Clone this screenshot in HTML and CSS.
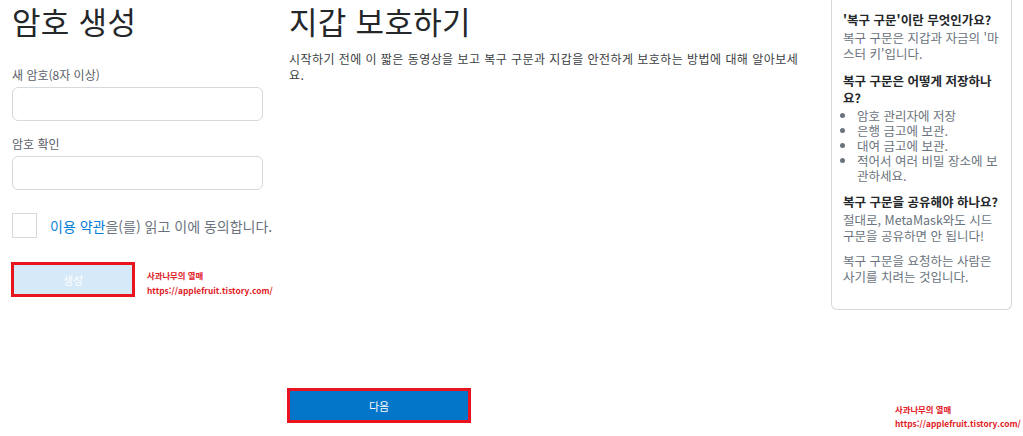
FILE: index.html
```html
<!DOCTYPE html>
<html lang="ko">
<head>
    <meta charset="UTF-8">
    <meta name="viewport" content="width=device-width, initial-scale=1.0">
    <title>암호 생성</title>
    <link rel="stylesheet" href="styles.css">
</head>
<body>
    <div class="page">
        <div class="create">
            <h1>암호 생성</h1>
            <label class="field-label" for="newPw">새 암호(8자 이상)</label>
            <input class="field" type="password" id="newPw">
            <label class="field-label" for="confirmPw">암호 확인</label>
            <input class="field" type="password" id="confirmPw">
            <div class="terms">
                <span class="check"></span>
                <span class="terms-text"><a href="#">이용 약관</a>을(를) 읽고 이에 동의합니다.</span>
            </div>
            <div class="create-row">
                <button class="btn-create">생성</button>
                <div class="mark">
                    <div>사과나무의 열매</div>
                    <div>https://applefruit.tistory.com/</div>
                </div>
            </div>
        </div>
        <div class="secure">
            <h1>지갑 보호하기</h1>
            <p class="intro">시작하기 전에 이 짧은 동영상을 보고 복구 구문과 지갑을 안전하게 보호하는 방법에 대해 알아보세요.</p>
            <button class="btn-next">다음</button>
        </div>
        <div class="side">
            <div class="card">
                <h3>'복구 구문'이란 무엇인가요?</h3>
                <p>복구 구문은 지갑과 자금의 '마스터 키'입니다.</p>
                <h3>복구 구문은 어떻게 저장하나요?</h3>
                <ul>
                    <li>암호 관리자에 저장</li>
                    <li>은행 금고에 보관.</li>
                    <li>대여 금고에 보관.</li>
                    <li>적어서 여러 비밀 장소에 보관하세요.</li>
                </ul>
                <h3>복구 구문을 공유해야 하나요?</h3>
                <p>절대로, MetaMask와도 시드 구문을 공유하면 안 됩니다!</p>
                <p class="last">복구 구문을 요청하는 사람은 사기를 치려는 것입니다.</p>
            </div>
            <div class="mark mark-side">
                <div>사과나무의 열매</div>
                <div>https://applefruit.tistory.com/</div>
            </div>
        </div>
    </div>
</body>
</html>
```

FILE: styles.css
```css
* {
    box-sizing: border-box;
}
body {
    margin: 0;
    background: #fff;
    color: #24272a;
    font-family: "Noto Sans CJK KR", "Noto Sans", sans-serif;
}
.page {
    display: flex;
    align-items: flex-start;
}
h1 {
    margin: 0;
    font-size: 31px;
    font-weight: 400;
    line-height: 42px;
    letter-spacing: 0.3px;
}
/* 왼쪽: 암호 생성 */
.create {
    flex: none;
    width: 263px;
    padding-left: 12px;
    display: flex;
    flex-direction: column;
}
.field-label {
    margin-top: 25px;
    font-size: 12px;
    line-height: 16px;
    color: #5b5d67;
}
.field-label + .field {
    margin-top: 4px;
}
.field + .field-label {
    margin-top: 15px;
}
.field {
    width: 251px;
    height: 34px;
    border: 1px solid #d6d9dc;
    border-radius: 6px;
    background: #fff;
}
.terms {
    display: flex;
    align-items: center;
    margin-top: 23px;
    white-space: nowrap;
}
.check {
    flex: none;
    width: 25px;
    height: 25px;
    border: 1px solid #d6d9dc;
    background: #fff;
}
.terms-text {
    margin-left: 13px;
    font-size: 14px;
    color: #6a737d;
}
.terms-text a {
    color: #037dd6;
    text-decoration: none;
}
.create-row {
    display: flex;
    align-items: flex-end;
    margin-top: 24px;
    white-space: nowrap;
}
.btn-create {
    flex: none;
    width: 124px;
    height: 35px;
    margin-left: -1px;
    border: 3px solid #e8141f;
    background: #d6e9f8;
    color: #fff;
    font-family: inherit;
    font-size: 11px;
}
.mark {
    color: #e0201f;
    font-size: 8.4px;
    font-weight: 700;
    line-height: 15px;
    white-space: nowrap;
}
.create-row .mark {
    margin-left: 12px;
    margin-bottom: -1px;
}
/* 가운데: 지갑 보호하기 */
.secure {
    flex: none;
    width: 516px;
    margin-left: 26px;
    display: flex;
    flex-direction: column;
}
.intro {
    margin: 9px 0 0;
    font-size: 12px;
    line-height: 16px;
    letter-spacing: 0.45px;
    color: #3b3e42;
}
.btn-next {
    width: 184px;
    height: 35px;
    margin-top: 305px;
    margin-left: -2px;
    border: 3px solid #e8141f;
    background: #0376c9;
    color: #fff;
    font-family: inherit;
    font-size: 11px;
}
/* 오른쪽: 도움말 카드 */
.side {
    flex: none;
    margin-left: auto;
    margin-right: 11px;
    width: 181px;
}
.card {
    border: 1px solid #d6d9dc;
    border-top: none;
    border-radius: 0 0 6px 6px;
    padding: 11px 11px 24px;
    font-size: 12.5px;
    line-height: 16px;
    word-break: break-all;
}
.card h3 {
    margin: 0;
    font-size: 12.5px;
    font-weight: 700;
    line-height: 17px;
    color: #24272a;
}
.card p {
    margin: 2px 0 0;
    color: #6a737d;
}
.card p + h3, .card ul + h3 {
    margin-top: 10px;
}
.card p.last {
    margin-top: 9px;
}
.card ul {
    margin: 2px 0 0;
    padding-left: 14px;
    color: #6a737d;
    line-height: 15px;
}
.mark-side {
    margin-top: 92px;
    margin-left: 64px;
    line-height: 14px;
}
```
